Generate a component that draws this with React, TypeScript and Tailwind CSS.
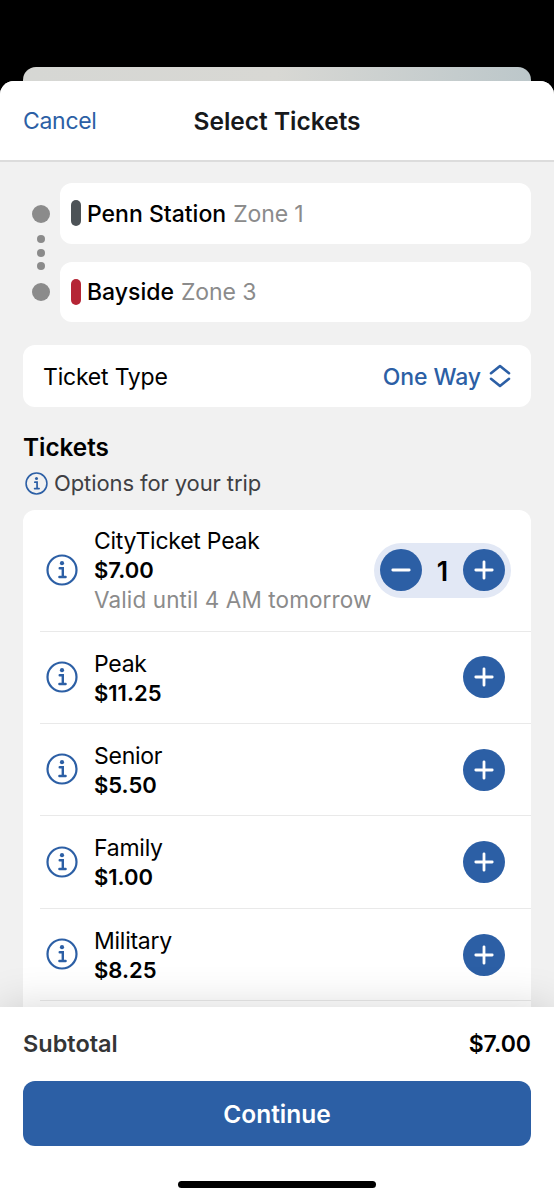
import { useState } from 'react';
import clsx from 'clsx';

type Ticket = { name: string; price: string; note?: string };

const tickets: Ticket[] = [
  { name: 'CityTicket Peak', price: '$7.00', note: 'Valid until 4 AM tomorrow' },
  { name: 'Peak', price: '$11.25' },
  { name: 'Senior', price: '$5.50' },
  { name: 'Family', price: '$1.00' },
  { name: 'Military', price: '$8.25' },
];

const stations = [
  { name: 'Penn Station', zone: 'Zone 1', color: 'bg-[#4d5357]' },
  { name: 'Bayside', zone: 'Zone 3', color: 'bg-[#b52535]' },
];

function InfoIcon({ className }: { className?: string }) {
  return (
    <svg viewBox="0 0 32 32" fill="none" stroke="currentColor" className={clsx('shrink-0 text-[#2c5fa5]', className)}>
      <circle cx="16" cy="16" r="14.5" strokeWidth="2.2" />
      <circle cx="16" cy="9.2" r="2.1" fill="currentColor" stroke="none" />
      <path d="M13.7 14.2h3.1v8.6M13.4 23h6.2" strokeWidth="2.4" strokeLinecap="round" />
    </svg>
  );
}

function StepButton({ kind, onClick }: { kind: 'plus' | 'minus'; onClick: () => void }) {
  return (
    <button
      type="button"
      aria-label={kind === 'plus' ? 'Add ticket' : 'Remove ticket'}
      onClick={onClick}
      className="grid size-[42px] shrink-0 place-items-center rounded-full bg-[#2c5fa5] text-white"
    >
      <svg viewBox="0 0 20 20" className="size-5" fill="none" stroke="currentColor" strokeWidth="2.8" strokeLinecap="round">
        <path d={kind === 'plus' ? 'M1.8 10h16.4M10 1.8v16.4' : 'M1.8 10h16.4'} />
      </svg>
    </button>
  );
}

function TicketRow({ ticket, initial }: { ticket: Ticket; initial: number }) {
  const [count, setCount] = useState(initial);
  return (
    <li className={clsx('ml-[17px] flex items-center border-b border-[#e9e9e9] pl-1.5', ticket.note ? 'h-[121.8px]' : 'h-[92.35px]')}>
      <InfoIcon className="mb-px size-8" />
      <div className={clsx('ml-4 flex-1 whitespace-nowrap leading-[29px] text-black', ticket.note ? 'pt-px' : 'pt-[2.5px]')}>
        <p className="tracking-[-0.25px]">{ticket.name}</p>
        <p className="text-[22px] font-semibold">{ticket.price}</p>
        {ticket.note && <p className="text-[22.5px] tracking-[0.12px] text-[#8b8b8b]">{ticket.note}</p>}
      </div>
      {count > 0 ? (
        <div className="mr-5 flex h-[55px] w-[137px] shrink-0 items-center justify-between rounded-full bg-[#e2e8f5] px-[5.5px]">
          <StepButton kind="minus" onClick={() => setCount(count - 1)} />
          <span className="pt-[3px] text-[27px] font-semibold leading-none">{count}</span>
          <StepButton kind="plus" onClick={() => setCount(count + 1)} />
        </div>
      ) : (
        <div className="mr-[26px]">
          <StepButton kind="plus" onClick={() => setCount(1)} />
        </div>
      )}
    </li>
  );
}

export default function App() {
  return (
    <div className="flex h-[1200px] w-[554px] flex-col overflow-hidden bg-black font-['Inter',sans-serif] text-[23px]">
      <div className="mx-[23px] mt-[67px] h-[14px] shrink-0 rounded-t-[13px] bg-linear-to-r from-[#d6d7d4] via-[#d8d8d4] to-[#bcc7ca]" />

      <div className="flex min-h-0 flex-1 flex-col overflow-hidden rounded-t-[14px] bg-[#f1f1f1]">
        <header className="grid h-[81px] shrink-0 grid-cols-[1fr_auto_1fr] items-center border-b-2 border-[#dcdcdc] bg-white px-[23px] pt-px">
          <button type="button" className="justify-self-start pt-px tracking-[-0.3px] text-[#2c5fa5]">Cancel</button>
          <h1 className="text-[24.5px] font-semibold text-[#17191b]">Select Tickets</h1>
        </header>

        <main className="flex min-h-0 flex-1 flex-col overflow-hidden px-[23px] pt-[21px]">
          <section className="flex shrink-0">
            <div className="flex w-[37px] flex-col items-start pt-[22px] pb-[21px] pl-[9px]">
              <span className="size-[18px] rounded-full bg-[#8b8b8b]" />
              <div className="ml-[5px] mt-[12px] flex flex-col gap-[5.5px]">
                <span className="size-2 rounded-full bg-[#8b8b8b]" />
                <span className="size-2 rounded-full bg-[#8b8b8b]" />
                <span className="size-2 rounded-full bg-[#8b8b8b]" />
              </div>
              <span className="mt-auto size-[18px] rounded-full bg-[#8b8b8b]" />
            </div>
            <div className="flex flex-1 flex-col gap-[18px]">
              {stations.map((station) => (
                <div key={station.name} className="flex h-[60.5px] items-center rounded-[12px] bg-white pl-[11px]">
                  <span className={clsx('mr-1.5 h-[26px] w-[10px] rounded-full', station.color)} />
                  <span className="pt-px font-medium text-black">{station.name}</span>
                  <span className="ml-[7px] pt-px tracking-[-0.1px] text-[#8b8b8b]">{station.zone}</span>
                </div>
              ))}
            </div>
          </section>

          <button type="button" className="mt-[23px] flex h-[62px] shrink-0 items-center justify-between rounded-[12px] bg-white px-5">
            <span className="pt-[2px] tracking-[-0.2px] text-black">Ticket Type</span>
            <span className="flex items-center gap-[8px] font-medium tracking-[-0.1px] text-[#2c5fa5]">
              <span className="pt-[2px]">One Way</span>
              <svg viewBox="0 0 22 24" className="h-6 w-[22px]" fill="none" stroke="currentColor" strokeWidth="2.6" strokeLinecap="round" strokeLinejoin="round">
                <path d="M2 9.2 11 2l9 7.2M2 14.8 11 22l9-7.2" />
              </svg>
            </span>
          </button>

          <h2 className="mt-[25px] shrink-0 text-[24.3px] font-semibold leading-[30px] text-black">Tickets</h2>
          <p className="mt-[6px] flex shrink-0 items-center gap-[6px] pl-[2px] text-[22px] leading-[30px] tracking-[-0.1px] text-[#3f4043]">
            <InfoIcon className="size-[23px]" />
            Options for your trip
          </p>

          <ul className="mt-[12px] min-h-0 flex-1 rounded-t-[12px] bg-white">
            {tickets.map((ticket, i) => (
              <TicketRow key={ticket.name} ticket={ticket} initial={i === 0 ? 1 : 0} />
            ))}
          </ul>
        </main>

        <footer className="relative flex h-[193px] shrink-0 flex-col bg-white px-[23px] pt-[22px] shadow-[0_0_40px_rgba(0,0,0,0.16)]">
          <div className="flex items-center justify-between leading-[30px]">
            <span className="text-[23.5px] font-semibold text-[#343536]">Subtotal</span>
            <span className="font-semibold text-black">$7.00</span>
          </div>
          <button type="button" className="mt-[22px] h-[65px] shrink-0 rounded-[12px] bg-[#2c5fa5] pt-px text-[24.5px] font-semibold text-white">
            Continue
          </button>
          <div className="mx-auto mt-[35px] h-[7px] w-[198px] shrink-0 rounded-full bg-black" />
        </footer>
      </div>
    </div>
  );
}
